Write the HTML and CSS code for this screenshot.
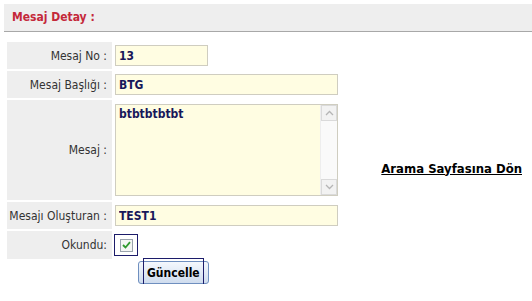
FILE: index.html
```html
<!DOCTYPE html>
<html lang="tr">
<head>
    <meta charset="UTF-8">
    <title>Mesaj Detay</title>
    <link rel="stylesheet" href="styles.css">
</head>
<body>
    <div class="page-title">Mesaj Detay :</div>

    <div class="content">
        <div class="form-col">
            <table class="detail">
                <tr>
                    <td class="label">Mesaj No :</td>
                    <td class="value"><input class="field short" type="text" value="13"></td>
                </tr>
                <tr>
                    <td class="label">Mesaj Başlığı :</td>
                    <td class="value"><input class="field" type="text" value="BTG"></td>
                </tr>
                <tr>
                    <td class="label">Mesaj :</td>
                    <td class="value">
                        <div class="memo">
                            <textarea>btbtbtbtbt</textarea>
                            <div class="scroll">
                                <span class="scroll-btn">
                                    <svg width="9" height="6" viewBox="0 0 9 6"><path d="M1 5 L4.5 1.5 L8 5" fill="none" stroke="#b5b5b5" stroke-width="1.3"/></svg>
                                </span>
                                <span class="scroll-track"></span>
                                <span class="scroll-btn">
                                    <svg width="9" height="6" viewBox="0 0 9 6"><path d="M1 1 L4.5 4.5 L8 1" fill="none" stroke="#b5b5b5" stroke-width="1.3"/></svg>
                                </span>
                            </div>
                        </div>
                    </td>
                </tr>
                <tr>
                    <td class="label">Mesajı Oluşturan :</td>
                    <td class="value"><input class="field" type="text" value="TEST1"></td>
                </tr>
                <tr>
                    <td class="label">Okundu:</td>
                    <td class="value">
                        <span class="check-focus">
                            <span class="check">
                                <svg width="9" height="8" viewBox="0 0 9 8"><path d="M1 4 L3.5 6.5 L8 1.2" fill="none" stroke="#2f9a2f" stroke-width="1.8"/></svg>
                            </span>
                        </span>
                    </td>
                </tr>
            </table>
            <div class="actions">
                <button class="btn" type="button">Güncelle</button>
            </div>
        </div>

        <div class="link-col">
            <a href="#" class="back-link">Arama Sayfasına Dön</a>
        </div>
    </div>
</body>
</html>
```

FILE: styles.css
```css
body {
    margin: 4px 0 0 4px;
    font-family: "DejaVu Sans Condensed", "DejaVu Sans", Verdana, sans-serif;
    font-size: 12px;
    color: #333;
    background: white;
}
.page-title {
    height: 27px;
    line-height: 27px;
    padding-left: 8px;
    background: #eeeeee;
    border-bottom: 1px solid #a8a8a8;
    color: #c4283a;
    font-weight: bold;
    font-size: 12px;
}
.content {
    display: flex;
    align-items: center;
}
.form-col {
    width: 337px;
}
.detail {
    margin: 8px 0 0 1px;
    border-collapse: separate;
    border-spacing: 2px;
}
.label {
    width: 98px;
    padding: 0 5px 0 2px;
    background: #eeeeee;
    text-align: right;
    white-space: nowrap;
}
.value {
    padding: 3px 0 3px 1px;
}
.field {
    display: block;
    box-sizing: border-box;
    width: 223px;
    height: 21px;
    margin: 0;
    padding: 0 3px;
    border: 1px solid #cfcdc0;
    background: #fffde2;
    font-family: "DejaVu Sans Condensed", "DejaVu Sans", Verdana, sans-serif;
    font-size: 12px;
    font-weight: bold;
    color: #17175a;
}
.field.short {
    width: 93px;
}
.memo {
    display: flex;
    box-sizing: border-box;
    width: 223px;
    height: 92px;
    margin: 1px 0;
    border: 1px solid #cfcdc0;
    background: #fffde2;
}
.memo textarea {
    flex: 1;
    margin: 0;
    padding: 2px 3px;
    border: none;
    background: transparent;
    resize: none;
    outline: none;
    font-family: "DejaVu Sans Condensed", "DejaVu Sans", Verdana, sans-serif;
    font-size: 12px;
    font-weight: bold;
    color: #17175a;
}
.scroll {
    display: flex;
    flex-direction: column;
    width: 16px;
    background: #fafafa;
    border-left: 1px solid #eee;
}
.scroll-btn {
    display: flex;
    align-items: center;
    justify-content: center;
    height: 16px;
    background: #f2f2f2;
    border: 1px solid #dadada;
    box-sizing: border-box;
}
.scroll-track {
    flex: 1;
}
.check-focus {
    display: inline-flex;
    align-items: center;
    justify-content: center;
    box-sizing: border-box;
    width: 24px;
    height: 22px;
    margin-left: -1px;
    border: 1px solid #1c1c6a;
    vertical-align: middle;
}
.check {
    display: flex;
    align-items: center;
    justify-content: center;
    box-sizing: border-box;
    width: 13px;
    height: 13px;
    border: 1px solid #9aa3ad;
    background: #f4f6f4;
}
.actions {
    padding: 0 0 0 134px;
}
.btn {
    position: relative;
    height: 23px;
    padding: 0 8px;
    border: 1px solid #6f8fbf;
    border-radius: 3px;
    background: linear-gradient(#f4f8fd, #cfdcee);
    font-family: "DejaVu Sans Condensed", "DejaVu Sans", Verdana, sans-serif;
    font-size: 12px;
    font-weight: bold;
    color: #000;
}
.btn::after {
    content: "";
    position: absolute;
    left: 4px;
    right: 4px;
    top: -4px;
    bottom: -4px;
    border: 1px solid #1c1c6a;
}
.link-col {
    flex: 1;
    display: flex;
    justify-content: flex-end;
    padding: 20px 10px 0 0;
}
.back-link {
    color: #000;
    font-weight: bold;
    font-size: 13px;
    text-decoration: underline;
}
```
